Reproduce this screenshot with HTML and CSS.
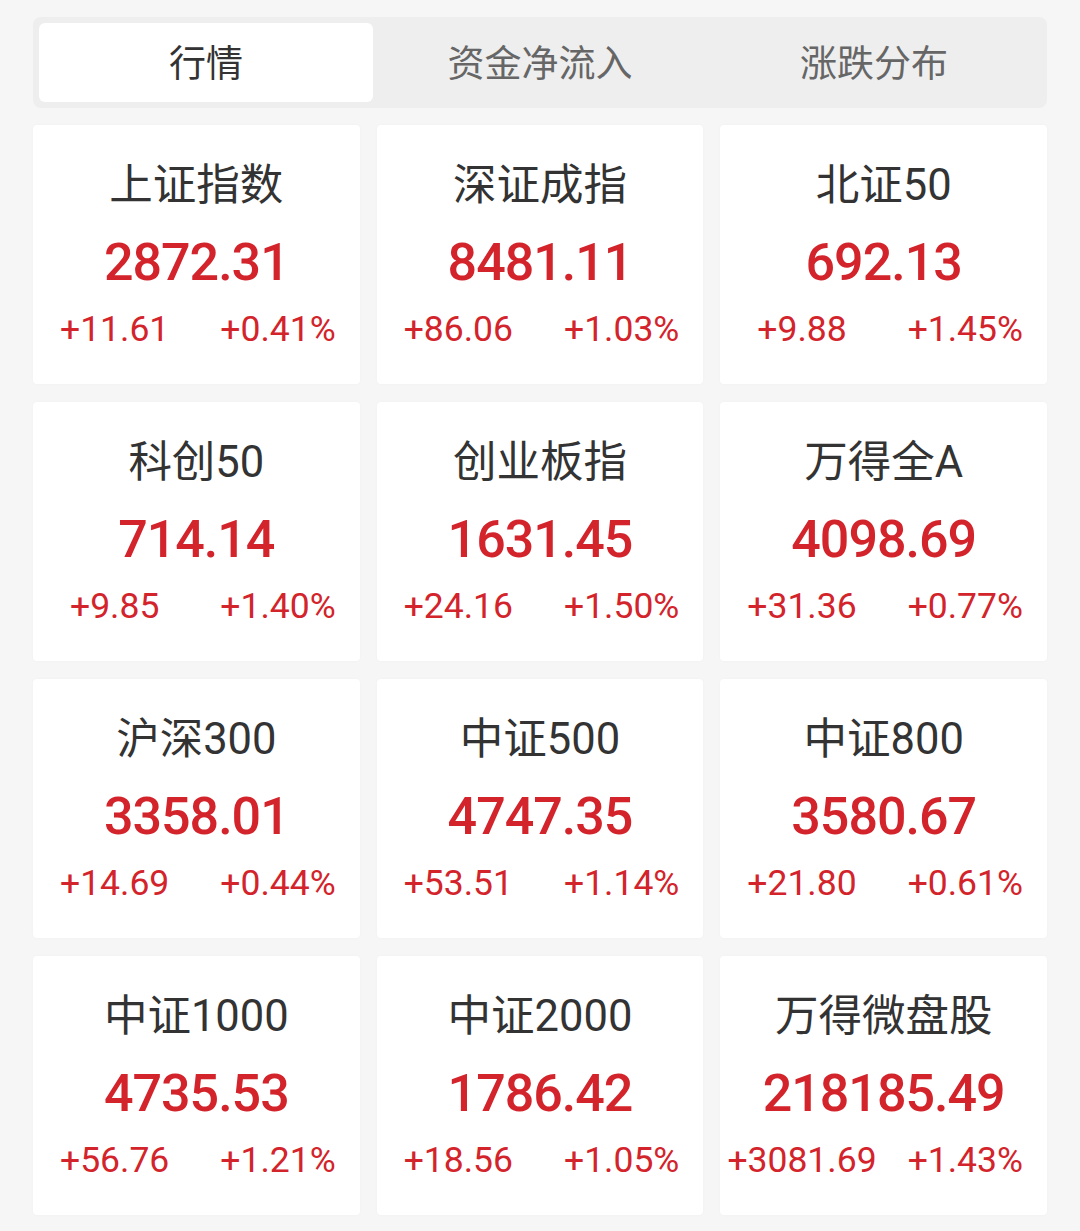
FILE: index.html
```html
<!DOCTYPE html>
<html lang="zh-CN">
<head>
    <meta charset="UTF-8">
    <meta name="viewport" content="width=device-width, initial-scale=1.0">
    <title>行情</title>
    <link rel="stylesheet" href="styles.css">
</head>
<body>
    <div class="page">
        <!-- Tabs -->
        <div class="tabs">
            <div class="tab active">行情</div>
            <div class="tab">资金净流入</div>
            <div class="tab">涨跌分布</div>
        </div>

        <!-- Index cards -->
        <div class="grid">
            <div class="card">
                <div class="name">上证指数</div>
                <div class="price">2872.31</div>
                <div class="change"><span>+11.61</span><span>+0.41%</span></div>
            </div>
            <div class="card">
                <div class="name">深证成指</div>
                <div class="price">8481.11</div>
                <div class="change"><span>+86.06</span><span>+1.03%</span></div>
            </div>
            <div class="card">
                <div class="name">北证50</div>
                <div class="price">692.13</div>
                <div class="change"><span>+9.88</span><span>+1.45%</span></div>
            </div>
            <div class="card">
                <div class="name">科创50</div>
                <div class="price">714.14</div>
                <div class="change"><span>+9.85</span><span>+1.40%</span></div>
            </div>
            <div class="card">
                <div class="name">创业板指</div>
                <div class="price">1631.45</div>
                <div class="change"><span>+24.16</span><span>+1.50%</span></div>
            </div>
            <div class="card">
                <div class="name">万得全A</div>
                <div class="price">4098.69</div>
                <div class="change"><span>+31.36</span><span>+0.77%</span></div>
            </div>
            <div class="card">
                <div class="name">沪深300</div>
                <div class="price">3358.01</div>
                <div class="change"><span>+14.69</span><span>+0.44%</span></div>
            </div>
            <div class="card">
                <div class="name">中证500</div>
                <div class="price">4747.35</div>
                <div class="change"><span>+53.51</span><span>+1.14%</span></div>
            </div>
            <div class="card">
                <div class="name">中证800</div>
                <div class="price">3580.67</div>
                <div class="change"><span>+21.80</span><span>+0.61%</span></div>
            </div>
            <div class="card">
                <div class="name">中证1000</div>
                <div class="price">4735.53</div>
                <div class="change"><span>+56.76</span><span>+1.21%</span></div>
            </div>
            <div class="card">
                <div class="name">中证2000</div>
                <div class="price">1786.42</div>
                <div class="change"><span>+18.56</span><span>+1.05%</span></div>
            </div>
            <div class="card">
                <div class="name">万得微盘股</div>
                <div class="price">218185.49</div>
                <div class="change"><span>+3081.69</span><span>+1.43%</span></div>
            </div>
        </div>
    </div>
</body>
</html>
```

FILE: styles.css
```css
/* General */
body {
    margin: 0;
    background: #f6f6f6;
    font-family: Roboto, "Noto Sans CJK SC", sans-serif;
}

.page {
    padding: 17px 33px 16px;
}

/* Tabs */
.tabs {
    display: flex;
    padding: 6px;
    background: #eeeeee;
    border-radius: 8px;
}

.tab {
    flex: 1;
    height: 79px;
    line-height: 77px;
    text-align: center;
    font-family: "Noto Sans CJK SC", sans-serif;
    font-size: 37px;
    color: #666;
    border-radius: 6px;
}

.tab.active {
    background: #fff;
    color: #333;
}

/* Cards */
.grid {
    display: grid;
    grid-template-columns: repeat(3, 1fr);
    column-gap: 17px;
    row-gap: 18px;
    margin-top: 17px;
}

.card {
    height: 259px;
    background: #fff;
    border-radius: 4px;
    box-shadow: 0 0 3px rgba(0, 0, 0, 0.03);
    padding-top: 36px;
    box-sizing: border-box;
    text-align: center;
}

.name {
    height: 50px;
    line-height: 50px;
    font-size: 43.5px;
    color: #333;
}

.price {
    margin-top: 22px;
    height: 60px;
    line-height: 60px;
    font-size: 52px;
    font-weight: 500;
    color: #d3232b;
    letter-spacing: -1px;
}

.change {
    display: flex;
    margin-top: 14px;
    height: 44px;
    line-height: 44px;
    font-size: 35.5px;
    color: #d3232b;
}

.change span {
    flex: 1;
    text-align: center;
}
```
